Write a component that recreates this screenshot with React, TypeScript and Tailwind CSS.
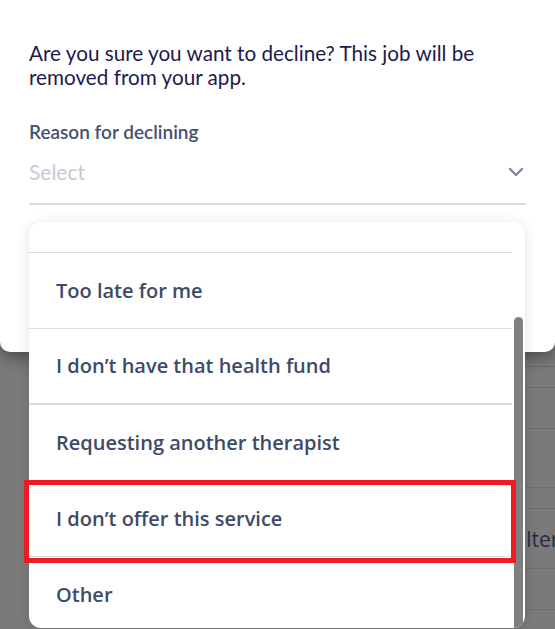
import React from "react";

const items = [
  "Too late for me",
  "I don\u2019t have that health fund",
  "Requesting another therapist",
  "I don\u2019t offer this service",
  "Other",
];

export default function App() {
  return (
    <div className="relative w-[555px] h-[629px] overflow-hidden bg-[#7a7a7a]">
      {/* modal */}
      <div className="relative z-10 h-[352px] bg-white rounded-b-[10px] shadow-[0_4px_18px_rgba(0,0,0,0.45)] px-[29px] pt-[41px]">
        <p className="max-w-[470px] text-[20.7px] leading-[24px] text-[#1d1a4f] font-['Lato',sans-serif]">
          Are you sure you want to decline? This job will be removed from your app.
        </p>
        <p className="mt-[32px] text-[19px] leading-[22px] text-[#45526e] font-['Lato',sans-serif] font-semibold">
          Reason for declining
        </p>
        <div className="mt-[16px] flex items-center justify-between border-b-2 border-[#d8dbe2] pb-[18px]">
          <span className="text-[21px] leading-[26px] text-[#c5cad6] font-['Lato',sans-serif]">Select</span>
          <svg width="16" height="10" viewBox="0 0 16 10" className="mr-[2px]">
            <path d="M2 2l6 6 6-6" fill="none" stroke="#7a819b" strokeWidth="2.2" strokeLinecap="round" strokeLinejoin="round" />
          </svg>
        </div>
      </div>

      {/* background page under overlay */}
      <div className="ml-[522px] flex flex-col font-['Open_Sans',sans-serif]">
        <div className="h-[15px] border-b border-[#6c6c6c]" />
        <div className="h-[21px] border-b border-[#6c6c6c]" />
        <div className="h-[41px] border-b border-[#6e6e6e]" />
        <div className="h-[59px] border-b border-[#6e6e6e]" />
        <div className="h-[21px] border-b border-[#6e6e6e]" />
        <div className="h-[60px] border-b border-[#6e6e6e] flex items-center">
          <span className="whitespace-nowrap text-[21px] text-[#262c40] -ml-[12px] mt-[2px]">Filter</span>
        </div>
        <div className="h-[41px] border-b border-[#6e6e6e]" />
      </div>

      {/* dropdown */}
      <div className="absolute z-20 left-[29px] top-[222px] w-[496px] h-[406px] bg-white rounded-[12px] shadow-[0_2px_14px_rgba(0,0,0,0.12)] overflow-hidden flex font-['Open_Sans',sans-serif]">
        <div className="flex-1 flex flex-col">
          <div className="shrink-0 h-[31px] border-b border-[#dcdde6]" />
          {items.map((t, i) => (
            <div
              key={t}
              className={`shrink-0 h-[76px] flex items-center pl-[27px] text-[20px] font-semibold text-[#3d4b68] ${
                i === 1 ? "border-b-2 border-[#d6d9df]" : i < items.length - 1 ? "border-b border-[#dcdde6]" : ""
              }`}
            >
              {t}
            </div>
          ))}
        </div>
        <div className="w-[13px] pl-[2px] pr-[2px] pt-[95px]">
          <div className="w-[9px] h-full bg-[#808080] rounded-t-full" />
        </div>
      </div>

      {/* annotation */}
      <div className="absolute z-30 left-[24px] top-[480px] w-[492px] h-[83px] border-[5px] border-[#ed1c24]" />
    </div>
  );
}
